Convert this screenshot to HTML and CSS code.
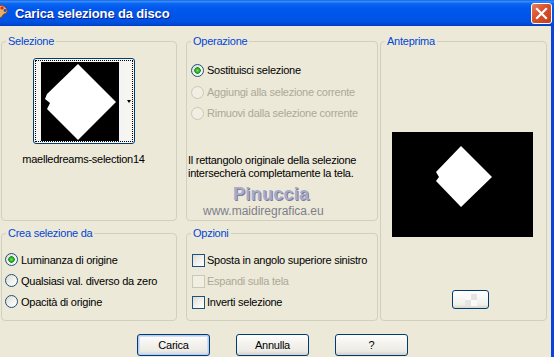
FILE: index.html
```html
<!DOCTYPE html>
<html lang="it">
<head>
  <meta charset="UTF-8">
  <title>Carica selezione da disco</title>
  <link rel="stylesheet" href="styles.css">
</head>
<body>
  <div class="window">
    <div class="titlebar">
      <svg class="app-icon" width="16" height="16" viewBox="0 0 16 16">
        <path d="M2 3 C6 0 14 1 15 6 C16 10 12 9 11 11 C10 14 6 15 3 13 C0 11 0 6 2 3 Z" fill="#E8B060" stroke="#8A4A10" stroke-width="1"/>
        <circle cx="10" cy="4" r="1.6" fill="#E02020"/>
        <circle cx="13" cy="6.5" r="1.4" fill="#2050E0"/>
        <circle cx="5" cy="9" r="1.6" fill="#30A030"/>
        <circle cx="6" cy="4.5" r="1.4" fill="#F8E020"/>
      </svg>
      <span class="title">Carica selezione da disco</span>
      <button class="close" aria-label="Chiudi">
        <svg width="13" height="13" viewBox="0 0 13 13">
          <path d="M2 2 L11 11 M11 2 L2 11" stroke="#fff" stroke-width="2.2" stroke-linecap="square"/>
        </svg>
      </button>
    </div>

    <div class="dialog">
      <div class="panels">
        <fieldset class="group g-sel">
          <legend>Selezione</legend>
          <div class="thumb">
            <div class="thumb-focus">
              <svg class="thumb-img" width="78" height="79" viewBox="0 0 78 79">
                <rect width="78" height="79" fill="#000"/>
                <polygon points="37,2 75,40 37,78 6,47 9,41 4,37 6,32" fill="#fff"/>
              </svg>
              <span class="thumb-strip"></span>
              <span class="thumb-arrow"></span>
            </div>
          </div>
          <div class="filename">maelledreams-selection14</div>
        </fieldset>

        <fieldset class="group g-op">
          <legend>Operazione</legend>
          <div class="options">
            <label class="opt"><input type="radio" name="op" checked> Sostituisci selezione</label>
            <label class="opt disabled"><input type="radio" name="op" disabled> Aggiungi alla selezione corrente</label>
            <label class="opt disabled"><input type="radio" name="op" disabled> Rimuovi dalla selezione corrente</label>
          </div>
          <p class="note">Il rettangolo originale della selezione<br>intersecherà completamente la tela.</p>
          <div class="wm-name">Pinuccia</div>
          <div class="wm-site">www.maidiregrafica.eu</div>
        </fieldset>

        <fieldset class="group g-prev">
          <legend>Anteprima</legend>
          <svg class="preview" width="141" height="105" viewBox="0 0 141 105">
            <rect width="141" height="105" fill="#000"/>
            <polygon points="69,14 100,45 69,75 44,49 47,45 44,40" fill="#fff"/>
          </svg>
          <button class="bg-btn" aria-label="Sfondo"></button>
        </fieldset>

        <fieldset class="group g-crea">
          <legend>Crea selezione da</legend>
          <div class="options">
            <label class="opt row21"><input type="radio" name="src" checked> Luminanza di origine</label>
            <label class="opt row21"><input type="radio" name="src"> Qualsiasi val. diverso da zero</label>
            <label class="opt row21"><input type="radio" name="src"> Opacità di origine</label>
          </div>
        </fieldset>

        <fieldset class="group g-opt">
          <legend>Opzioni</legend>
          <div class="options">
            <label class="opt check"><input type="checkbox"> Sposta in angolo superiore sinistro</label>
            <label class="opt check disabled"><input type="checkbox" disabled> Espandi sulla tela</label>
            <label class="opt check"><input type="checkbox"> Inverti selezione</label>
          </div>
        </fieldset>
      </div>

      <div class="buttons">
        <button class="btn default">Carica</button>
        <button class="btn">Annulla</button>
        <button class="btn">?</button>
      </div>
    </div>
  </div>
</body>
</html>
```

FILE: styles.css
```css
* {
  box-sizing: border-box;
}
body {
  margin: 0;
  font-family: "Liberation Sans", Arial, sans-serif;
  font-size: 11px;
  letter-spacing: -0.25px;
  color: #000;
  background: #ECE9D8;
}
.window {
  width: 554px;
  height: 357px;
  display: flex;
  flex-direction: column;
  overflow: hidden;
}
.titlebar {
  height: 26px;
  flex: none;
  display: flex;
  align-items: center;
  padding-right: 2px;
  background: linear-gradient(to bottom, #0A5FEA 0%, #3C8EF8 5%, #0A66F0 14%, #0058EE 32%, #0055E8 60%, #0052E2 84%, #0048D4 94%, #003CC0 100%);
}
.app-icon {
  margin-left: -8px;
  margin-top: -2px;
}
.title {
  margin-left: 7px;
  flex: 1;
  color: #fff;
  font-weight: bold;
  font-size: 13px;
  letter-spacing: -0.15px;
  text-shadow: 1px 1px 0 #0A1A8A;
}
.close {
  width: 21px;
  height: 21px;
  padding: 0;
  border: 1px solid #fff;
  border-radius: 3px;
  background: linear-gradient(135deg, #E97B5B 0%, #DA4F2C 45%, #C23E1C 100%);
  display: flex;
  align-items: center;
  justify-content: center;
}
.dialog {
  flex: 1;
  padding: 9px 0 0 1px;
  border-right: 3px solid #0843DA;
}
.panels {
  display: grid;
  grid-template-columns: 176px 201px 169px;
  grid-template-rows: 186px 94px;
  row-gap: 6px;
}
.group {
  margin: 0;
  padding: 0;
  min-width: 0;
  border: 1px solid #D0D0BF;
  border-radius: 4px;
}
.group legend {
  margin-left: 4px;
  padding: 0 2px;
  line-height: 13px;
  color: #0046D5;
}
.g-sel {
  grid-column: 1;
  grid-row: 1;
  display: flex;
  flex-direction: column;
  align-items: center;
  padding-right: 11px;
}
.g-op {
  grid-column: 2;
  grid-row: 1;
  margin-left: 9px;
}
.g-prev {
  grid-column: 3;
  grid-row: 1 / span 2;
  margin-left: 2px;
}
.g-crea {
  grid-column: 1;
  grid-row: 2;
}
.g-opt {
  grid-column: 2;
  grid-row: 2;
  margin-left: 9px;
}

/* thumbnail picker */
.thumb {
  margin-top: 10px;
  width: 102px;
  height: 86px;
  padding: 1px;
  border: 1px solid #003C74;
  border-radius: 3px;
  background: #F6F5F0;
}
.thumb-focus {
  height: 100%;
  display: flex;
  align-items: center;
  padding-left: 5px;
  border: 1px dotted #000;
}
.thumb-img {
  display: block;
}
.thumb-strip {
  width: 6px;
  height: 79px;
  background: #F4F4F4;
}
.thumb-arrow {
  margin-left: 2px;
  border-top: 3px solid #000;
  border-left: 2.5px solid transparent;
  border-right: 2.5px solid transparent;
}
.filename {
  margin-top: 9px;
  line-height: 13px;
}

/* radios and checkboxes */
.options {
  display: flex;
  flex-direction: column;
}
.g-op .options {
  padding: 11px 0 0 4px;
}
.g-crea .options {
  padding: 9px 0 0 3px;
}
.g-opt .options {
  padding: 9px 0 0 5px;
}
.opt {
  height: 22px;
  display: flex;
  align-items: center;
}
.opt.row21 {
  height: 21px;
}
.g-opt .opt:nth-child(2),
.g-op .opt:nth-child(3) {
  height: 20px;
}
.opt.disabled {
  color: #ACA899;
}
.opt input {
  appearance: none;
  margin: 0 3px 0 0;
  width: 13px;
  height: 13px;
  flex: none;
  border: 1px solid #1C5180;
  background: linear-gradient(135deg, #DCDBD5 0%, #F4F3EE 60%, #fff 100%);
}
.opt input[type="radio"] {
  border-radius: 50%;
}
.opt input[type="radio"]:checked {
  background: radial-gradient(circle, #6FE85A 0, #2FB02B 2px, #1E8E1A 3px, transparent 3.5px),
    linear-gradient(135deg, #DCDBD5 0%, #F4F3EE 60%, #fff 100%);
}
.opt input:disabled {
  border-color: #CAC8BB;
  background: #F1EFE2;
}
.opt.check input {
  margin-right: 2px;
}

.note {
  margin: 31px 0 0 1px;
  line-height: 13px;
}
.wm-name {
  margin: 4px 0 0 46px;
  font-size: 18px;
  line-height: 20px;
  font-weight: bold;
  letter-spacing: 0.3px;
  color: #A9AACB;
  text-shadow: 1px 1px 0 #7B7D98;
}
.wm-site {
  margin: 1px 0 0 16px;
  font-size: 12px;
  line-height: 13px;
  letter-spacing: 0;
  color: #7E7E8C;
}

/* preview */
.preview {
  display: block;
  margin: 84px 0 0 11px;
}
.bg-btn {
  display: block;
  margin: 53px 0 0 71px;
  width: 37px;
  height: 19px;
  padding: 0;
  border: 1px solid #003C74;
  border-radius: 3px;
  background:
    repeating-conic-gradient(#E4E4E4 0 25%, #FAFAFA 0 50%) 12px 3px / 8px 8px no-repeat,
    linear-gradient(to bottom, #FFFFFF, #F0F0EA 80%, #D8D4C8);
  background-size: 12px 12px, auto;
}

/* dialog buttons */
.buttons {
  display: flex;
  gap: 26px;
  margin-top: 13px;
  padding-left: 136px;
}
.btn {
  width: 73px;
  height: 22px;
  padding: 0;
  font-family: inherit;
  font-size: 11px;
  letter-spacing: -0.25px;
  color: #000;
  border: 1px solid #003C74;
  border-radius: 3px;
  background: linear-gradient(to bottom, #FFFFFF 0%, #F4F3EE 40%, #ECEBE6 80%, #D6D0C5 100%);
}
.btn.default {
  box-shadow: inset 0 0 0 1px #B7CCF2, inset 0 0 0 2px #D2DEF6;
}
```
